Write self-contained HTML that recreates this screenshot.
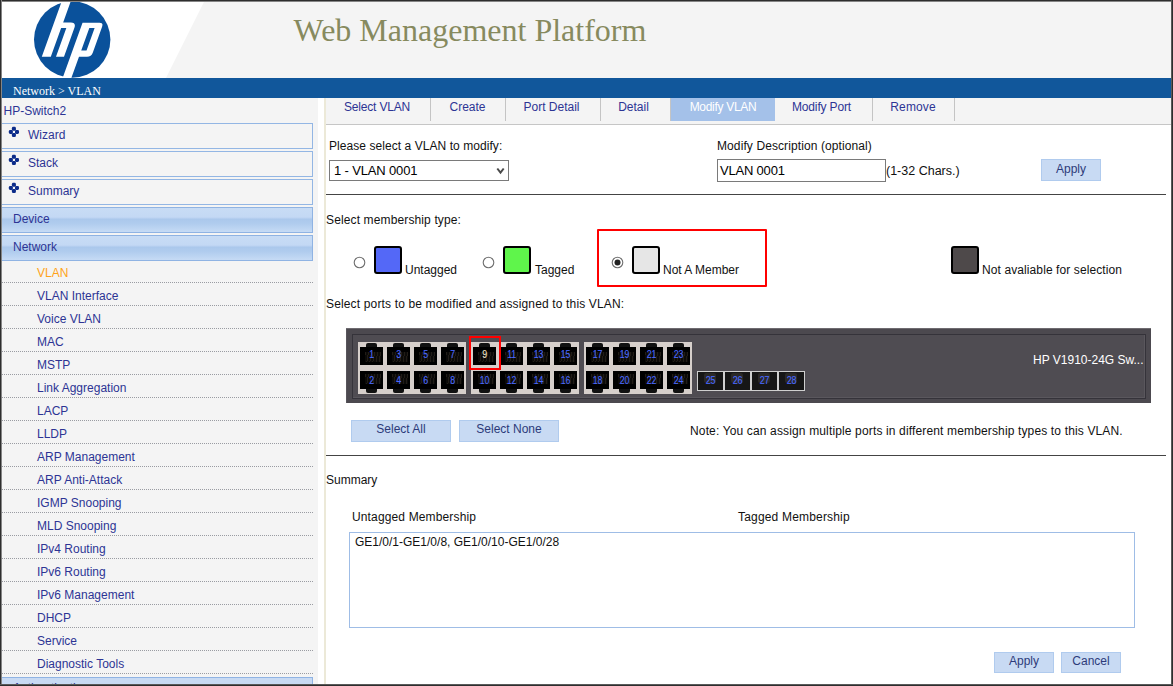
<!DOCTYPE html><html><head><meta charset="utf-8"><style>
html,body{margin:0;padding:0;}
body{width:1173px;height:686px;overflow:hidden;position:relative;background:#fff;font-family:'Liberation Sans',sans-serif;}
.t{position:absolute;white-space:nowrap;}
.r{position:absolute;box-sizing:border-box;}
</style></head><body>
<svg class="r" style="left:0;top:0" width="1173" height="78"><polygon points="205,0 1173,0 1173,78 166,78" fill="#f4f4f4"/></svg>
<svg class="r" style="left:0;top:0" width="200" height="78" viewBox="0 0 200 78">
<defs><clipPath id="cl"><rect x="0" y="0" width="200" height="78"/></clipPath></defs>
<g clip-path="url(#cl)">
<circle cx="72.2" cy="39.5" r="38.2" fill="#0a519b"/>
<g transform="translate(20.41,0) skewX(-19.8)" fill="#fff">
<path d="M41.8,-12 L50.8,-12 L50.8,22.4 L58.5,22.4 Q64,22.4 64,28 L64,56.7 L56,56.7 L56,28 L50.8,28 L50.8,56.7 L41.8,56.7 Z"/>
<path fill-rule="evenodd" d="M70.3,22.7 L87.3,22.7 Q91.3,22.7 91.3,26.7 L91.3,52.4 Q91.3,56.7 87,56.7 L79,56.7 L79,95 L70.3,95 Z M79,28 L84.3,28 L84.3,50.5 L79,50.5 Z"/>
</g></g></svg>
<div class="t" style="left:293.5px;top:10px;font-size:32px;line-height:40px;color:#878a5e;font-family:'Liberation Serif', serif;">Web Management Platform</div>
<div class="r" style="left:0px;top:78px;width:1173px;height:20px;background:#11579b;"></div>
<div class="t" style="left:13px;top:81px;font-size:12px;line-height:20px;color:#fff;font-family:'Liberation Serif', serif;">Network &gt; VLAN</div>
<div class="r" style="left:0px;top:98px;width:318px;height:588px;background:#f4f4f4;"></div>
<div class="r" style="left:324px;top:98px;width:2px;height:588px;background:#ece9d8;"></div>
<div class="t" style="left:3.5px;top:101px;font-size:12px;line-height:20px;color:#2d3494;font-family:'Liberation Sans', sans-serif;">HP-Switch2</div>
<div class="r" style="left:0px;top:123px;width:313px;height:26px;border:1px solid #93b6e4;background:#f4f4f4;"></div>
<div class="r" style="left:7px;top:124px;width:14px;height:14px;"><svg width="14" height="14" viewBox="0 0 14 14"><g fill="#0c2c8a"><rect x="4.9" y="2.85" width="4" height="4" rx="1.3"/><rect x="1.85" y="5.9" width="4" height="4" rx="1.3"/><rect x="8" y="5.9" width="4" height="4" rx="1.3"/><rect x="4.9" y="9" width="4" height="4" rx="1.3"/></g></svg></div>
<div class="t" style="left:28px;top:125px;font-size:12px;line-height:20px;color:#2d3494;font-family:'Liberation Sans', sans-serif;">Wizard</div>
<div class="r" style="left:0px;top:151px;width:313px;height:26px;border:1px solid #93b6e4;background:#f4f4f4;"></div>
<div class="r" style="left:7px;top:152px;width:14px;height:14px;"><svg width="14" height="14" viewBox="0 0 14 14"><g fill="#0c2c8a"><rect x="4.9" y="2.85" width="4" height="4" rx="1.3"/><rect x="1.85" y="5.9" width="4" height="4" rx="1.3"/><rect x="8" y="5.9" width="4" height="4" rx="1.3"/><rect x="4.9" y="9" width="4" height="4" rx="1.3"/></g></svg></div>
<div class="t" style="left:28px;top:153px;font-size:12px;line-height:20px;color:#2d3494;font-family:'Liberation Sans', sans-serif;">Stack</div>
<div class="r" style="left:0px;top:179px;width:313px;height:26px;border:1px solid #93b6e4;background:#f4f4f4;"></div>
<div class="r" style="left:7px;top:180px;width:14px;height:14px;"><svg width="14" height="14" viewBox="0 0 14 14"><g fill="#0c2c8a"><rect x="4.9" y="2.85" width="4" height="4" rx="1.3"/><rect x="1.85" y="5.9" width="4" height="4" rx="1.3"/><rect x="8" y="5.9" width="4" height="4" rx="1.3"/><rect x="4.9" y="9" width="4" height="4" rx="1.3"/></g></svg></div>
<div class="t" style="left:28px;top:181px;font-size:12px;line-height:20px;color:#2d3494;font-family:'Liberation Sans', sans-serif;">Summary</div>
<div class="r" style="left:0px;top:207px;width:313px;height:26px;border:1px solid #8fb3e3;background:linear-gradient(#c8dcf5 0%,#c3d8f4 38%,#abc8ec 47%,#b0ccee 65%,#c6dbf5 100%);"></div>
<div class="t" style="left:13px;top:209px;font-size:12px;line-height:20px;color:#2d3494;font-family:'Liberation Sans', sans-serif;">Device</div>
<div class="r" style="left:0px;top:235px;width:313px;height:26px;border:1px solid #8fb3e3;background:linear-gradient(#c8dcf5 0%,#c3d8f4 38%,#abc8ec 47%,#b0ccee 65%,#c6dbf5 100%);"></div>
<div class="t" style="left:13px;top:237px;font-size:12px;line-height:20px;color:#2d3494;font-family:'Liberation Sans', sans-serif;">Network</div>
<div class="t" style="left:37px;top:263px;font-size:12px;line-height:20px;color:#ffa31a;font-family:'Liberation Sans', sans-serif;">VLAN</div>
<div class="r" style="left:2px;top:282px;width:311px;height:1px;background:repeating-linear-gradient(90deg,#9a9ca2 0 1px,transparent 1px 2px);"></div>
<div class="t" style="left:37px;top:286px;font-size:12px;line-height:20px;color:#2d3494;font-family:'Liberation Sans', sans-serif;">VLAN Interface</div>
<div class="r" style="left:2px;top:305px;width:311px;height:1px;background:repeating-linear-gradient(90deg,#9a9ca2 0 1px,transparent 1px 2px);"></div>
<div class="t" style="left:37px;top:309px;font-size:12px;line-height:20px;color:#2d3494;font-family:'Liberation Sans', sans-serif;">Voice VLAN</div>
<div class="r" style="left:2px;top:328px;width:311px;height:1px;background:repeating-linear-gradient(90deg,#9a9ca2 0 1px,transparent 1px 2px);"></div>
<div class="t" style="left:37px;top:332px;font-size:12px;line-height:20px;color:#2d3494;font-family:'Liberation Sans', sans-serif;">MAC</div>
<div class="r" style="left:2px;top:351px;width:311px;height:1px;background:repeating-linear-gradient(90deg,#9a9ca2 0 1px,transparent 1px 2px);"></div>
<div class="t" style="left:37px;top:355px;font-size:12px;line-height:20px;color:#2d3494;font-family:'Liberation Sans', sans-serif;">MSTP</div>
<div class="r" style="left:2px;top:374px;width:311px;height:1px;background:repeating-linear-gradient(90deg,#9a9ca2 0 1px,transparent 1px 2px);"></div>
<div class="t" style="left:37px;top:378px;font-size:12px;line-height:20px;color:#2d3494;font-family:'Liberation Sans', sans-serif;">Link Aggregation</div>
<div class="r" style="left:2px;top:397px;width:311px;height:1px;background:repeating-linear-gradient(90deg,#9a9ca2 0 1px,transparent 1px 2px);"></div>
<div class="t" style="left:37px;top:401px;font-size:12px;line-height:20px;color:#2d3494;font-family:'Liberation Sans', sans-serif;">LACP</div>
<div class="r" style="left:2px;top:420px;width:311px;height:1px;background:repeating-linear-gradient(90deg,#9a9ca2 0 1px,transparent 1px 2px);"></div>
<div class="t" style="left:37px;top:424px;font-size:12px;line-height:20px;color:#2d3494;font-family:'Liberation Sans', sans-serif;">LLDP</div>
<div class="r" style="left:2px;top:443px;width:311px;height:1px;background:repeating-linear-gradient(90deg,#9a9ca2 0 1px,transparent 1px 2px);"></div>
<div class="t" style="left:37px;top:447px;font-size:12px;line-height:20px;color:#2d3494;font-family:'Liberation Sans', sans-serif;">ARP Management</div>
<div class="r" style="left:2px;top:466px;width:311px;height:1px;background:repeating-linear-gradient(90deg,#9a9ca2 0 1px,transparent 1px 2px);"></div>
<div class="t" style="left:37px;top:470px;font-size:12px;line-height:20px;color:#2d3494;font-family:'Liberation Sans', sans-serif;">ARP Anti-Attack</div>
<div class="r" style="left:2px;top:489px;width:311px;height:1px;background:repeating-linear-gradient(90deg,#9a9ca2 0 1px,transparent 1px 2px);"></div>
<div class="t" style="left:37px;top:493px;font-size:12px;line-height:20px;color:#2d3494;font-family:'Liberation Sans', sans-serif;">IGMP Snooping</div>
<div class="r" style="left:2px;top:512px;width:311px;height:1px;background:repeating-linear-gradient(90deg,#9a9ca2 0 1px,transparent 1px 2px);"></div>
<div class="t" style="left:37px;top:516px;font-size:12px;line-height:20px;color:#2d3494;font-family:'Liberation Sans', sans-serif;">MLD Snooping</div>
<div class="r" style="left:2px;top:535px;width:311px;height:1px;background:repeating-linear-gradient(90deg,#9a9ca2 0 1px,transparent 1px 2px);"></div>
<div class="t" style="left:37px;top:539px;font-size:12px;line-height:20px;color:#2d3494;font-family:'Liberation Sans', sans-serif;">IPv4 Routing</div>
<div class="r" style="left:2px;top:558px;width:311px;height:1px;background:repeating-linear-gradient(90deg,#9a9ca2 0 1px,transparent 1px 2px);"></div>
<div class="t" style="left:37px;top:562px;font-size:12px;line-height:20px;color:#2d3494;font-family:'Liberation Sans', sans-serif;">IPv6 Routing</div>
<div class="r" style="left:2px;top:581px;width:311px;height:1px;background:repeating-linear-gradient(90deg,#9a9ca2 0 1px,transparent 1px 2px);"></div>
<div class="t" style="left:37px;top:585px;font-size:12px;line-height:20px;color:#2d3494;font-family:'Liberation Sans', sans-serif;">IPv6 Management</div>
<div class="r" style="left:2px;top:604px;width:311px;height:1px;background:repeating-linear-gradient(90deg,#9a9ca2 0 1px,transparent 1px 2px);"></div>
<div class="t" style="left:37px;top:608px;font-size:12px;line-height:20px;color:#2d3494;font-family:'Liberation Sans', sans-serif;">DHCP</div>
<div class="r" style="left:2px;top:627px;width:311px;height:1px;background:repeating-linear-gradient(90deg,#9a9ca2 0 1px,transparent 1px 2px);"></div>
<div class="t" style="left:37px;top:631px;font-size:12px;line-height:20px;color:#2d3494;font-family:'Liberation Sans', sans-serif;">Service</div>
<div class="r" style="left:2px;top:650px;width:311px;height:1px;background:repeating-linear-gradient(90deg,#9a9ca2 0 1px,transparent 1px 2px);"></div>
<div class="t" style="left:37px;top:654px;font-size:12px;line-height:20px;color:#2d3494;font-family:'Liberation Sans', sans-serif;">Diagnostic Tools</div>
<div class="r" style="left:2px;top:673px;width:311px;height:1px;background:repeating-linear-gradient(90deg,#9a9ca2 0 1px,transparent 1px 2px);"></div>
<div class="r" style="left:0px;top:677px;width:313px;height:23px;border:1px solid #8fb3e3;background:#c8daf3;"></div>
<div class="t" style="left:13px;top:678px;font-size:12px;line-height:20px;color:#2d3494;font-family:'Liberation Sans', sans-serif;">Authentication</div>
<div class="r" style="left:326px;top:98px;width:845px;height:26px;background:#f4f4f4;"></div>
<div class="r" style="left:326px;top:124px;width:845px;height:1px;background:#c6c6c6;"></div>
<div class="r" style="left:671px;top:98px;width:104px;height:23px;background:#a4c1e9;"></div>
<div class="r" style="left:430px;top:98px;width:1px;height:23px;background:#c4c4c4;"></div>
<div class="r" style="left:505px;top:98px;width:1px;height:23px;background:#c4c4c4;"></div>
<div class="r" style="left:600px;top:98px;width:1px;height:23px;background:#c4c4c4;"></div>
<div class="r" style="left:670px;top:98px;width:1px;height:23px;background:#c4c4c4;"></div>
<div class="r" style="left:872px;top:98px;width:1px;height:23px;background:#c4c4c4;"></div>
<div class="r" style="left:954px;top:98px;width:1px;height:23px;background:#c4c4c4;"></div>
<div class="t" style="left:325px;top:97px;width:104px;text-align:center;font-size:12px;line-height:20px;color:#2d3494;letter-spacing:-0.18px;">Select VLAN</div>
<div class="t" style="left:430.5px;top:97px;width:74.0px;text-align:center;font-size:12px;line-height:20px;color:#2d3494;letter-spacing:0px;">Create</div>
<div class="t" style="left:504.5px;top:97px;width:94.0px;text-align:center;font-size:12px;line-height:20px;color:#2d3494;letter-spacing:0px;">Port Detail</div>
<div class="t" style="left:599px;top:97px;width:69px;text-align:center;font-size:12px;line-height:20px;color:#2d3494;letter-spacing:0px;">Detail</div>
<div class="t" style="left:671px;top:97px;width:104px;text-align:center;font-size:12px;line-height:20px;color:#fff;letter-spacing:-0.3px;">Modify VLAN</div>
<div class="t" style="left:773px;top:97px;width:97px;text-align:center;font-size:12px;line-height:20px;color:#2d3494;letter-spacing:-0.15px;">Modify Port</div>
<div class="t" style="left:872.5px;top:97px;width:81.0px;text-align:center;font-size:12px;line-height:20px;color:#2d3494;letter-spacing:0.12px;">Remove</div>
<div class="t" style="left:329px;top:136px;font-size:12px;line-height:20px;color:#111;font-family:'Liberation Sans', sans-serif;letter-spacing:0.06px;">Please select a VLAN to modify:</div>
<div class="r" style="left:329px;top:160px;width:180px;height:21px;border:1px solid #7a7a7a;background:#fff;"></div>
<div class="t" style="left:334px;top:161px;font-size:13px;line-height:20px;color:#000;font-family:'Liberation Sans', sans-serif;letter-spacing:-0.15px;">1 - VLAN 0001</div>
<svg class="r" style="left:495px;top:167px" width="11" height="8"><polyline points="2.3,1.5 5.5,5.6 8.7,1.5" fill="none" stroke="#4a4a4a" stroke-width="2"/></svg>
<div class="t" style="left:717px;top:136px;font-size:12px;line-height:20px;color:#111;font-family:'Liberation Sans', sans-serif;letter-spacing:0.1px;">Modify Description (optional)</div>
<div class="r" style="left:717px;top:159px;width:169px;height:23px;border:1px solid #7a7a7a;background:#fff;"></div>
<div class="t" style="left:720px;top:161px;font-size:13px;line-height:20px;color:#000;font-family:'Liberation Sans', sans-serif;letter-spacing:-0.2px;">VLAN 0001</div>
<div class="t" style="left:886px;top:161px;font-size:12.5px;line-height:20px;color:#111;font-family:'Liberation Sans', sans-serif;">(1-32 Chars.)</div>
<div class="r" style="left:1041px;top:159px;width:60px;height:22px;background:#c8daf3;border:1px solid #b0cbee;"></div>
<div class="t" style="left:1041px;top:159px;width:60px;text-align:center;font-size:12px;line-height:20px;color:#2d3a7a;">Apply</div>
<div class="r" style="left:326px;top:194px;width:840px;height:1px;background:#444;"></div>
<div class="t" style="left:326px;top:210px;font-size:12px;line-height:20px;color:#111;font-family:'Liberation Sans', sans-serif;letter-spacing:0.13px;">Select membership type:</div>
<svg class="r" style="left:353.0px;top:256.0px" width="13" height="13"><circle cx="6.5" cy="6.5" r="5.3" fill="#fff" stroke="#6f6f6f" stroke-width="1.1"/></svg>
<svg class="r" style="left:482.0px;top:256.0px" width="13" height="13"><circle cx="6.5" cy="6.5" r="5.3" fill="#fff" stroke="#6f6f6f" stroke-width="1.1"/></svg>
<svg class="r" style="left:611.0px;top:256.0px" width="13" height="13"><circle cx="6.5" cy="6.5" r="5.3" fill="#fff" stroke="#6f6f6f" stroke-width="1.1"/><circle cx="6.5" cy="6.5" r="3" fill="#222"/></svg>
<div class="r" style="left:374px;top:246px;width:28px;height:28px;border:2px solid #000;border-radius:3px;background:#5468f7;"></div>
<div class="r" style="left:503px;top:246px;width:28px;height:28px;border:2px solid #000;border-radius:3px;background:#5ff54b;"></div>
<div class="r" style="left:632px;top:246px;width:28px;height:28px;border:2px solid #000;border-radius:3px;background:#e6e6e6;"></div>
<div class="r" style="left:951px;top:246px;width:28px;height:28px;border:2px solid #000;border-radius:3px;background:#4e494a;"></div>
<div class="t" style="left:405px;top:260px;font-size:12px;line-height:20px;color:#111;font-family:'Liberation Sans', sans-serif;">Untagged</div>
<div class="t" style="left:535px;top:260px;font-size:12px;line-height:20px;color:#111;font-family:'Liberation Sans', sans-serif;">Tagged</div>
<div class="t" style="left:663px;top:260px;font-size:12px;line-height:20px;color:#111;font-family:'Liberation Sans', sans-serif;">Not A Member</div>
<div class="t" style="left:982px;top:260px;font-size:12px;line-height:20px;color:#111;font-family:'Liberation Sans', sans-serif;letter-spacing:0.1px;">Not avaliable for selection</div>
<div class="r" style="left:597px;top:229px;width:170px;height:58px;border:2px solid #ff0000;border-radius:1px;"></div>
<div class="t" style="left:326px;top:294px;font-size:12px;line-height:20px;color:#111;font-family:'Liberation Sans', sans-serif;letter-spacing:0.15px;">Select ports to be modified and assigned to this VLAN:</div>
<div class="r" style="left:346px;top:328px;width:805px;height:75px;background:#4c494f;border-top:1px solid #6e6b70;box-shadow:inset 1px 0 0 #58555b;"></div>
<div class="r" style="left:352px;top:334px;width:794px;height:65px;background:#4f4c52;border:1px solid #35333a;box-shadow:inset -1px -1px 0 #5a575d;"></div>
<div class="r" style="left:358px;top:342px;width:108px;height:52px;background:#d6cfcb;"></div>
<div class="r" style="left:471px;top:342px;width:108px;height:52px;background:#d6cfcb;"></div>
<div class="r" style="left:584px;top:342px;width:108px;height:52px;background:#d6cfcb;"></div>
<div class="r" style="left:366px;top:343px;width:11px;height:5px;background:#111;border-radius:2px 2px 0 0;"></div>
<div class="r" style="left:360px;top:347px;width:23px;height:18px;background:#000;"></div>
<div class="r" style="left:365px;top:352px;width:16px;height:10px;background:repeating-linear-gradient(100deg,#211c17 0 1px,#0b0a08 1px 3px);"></div>
<div class="t" style="left:360px;top:345px;width:23px;text-align:center;font-size:10px;line-height:20px;color:#4a6aff;letter-spacing:-0.3px;-webkit-text-stroke:0.1px #4a6aff;transform:scaleX(0.88);">1</div>
<div class="r" style="left:366px;top:388px;width:11px;height:5px;background:#111;border-radius:0 0 2px 2px;"></div>
<div class="r" style="left:360px;top:371px;width:23px;height:18px;background:#000;"></div>
<div class="r" style="left:365px;top:374px;width:16px;height:10px;background:repeating-linear-gradient(100deg,#211c17 0 1px,#0b0a08 1px 3px);"></div>
<div class="t" style="left:360px;top:371px;width:23px;text-align:center;font-size:10px;line-height:20px;color:#4a6aff;letter-spacing:-0.3px;-webkit-text-stroke:0.1px #4a6aff;transform:scaleX(0.88);">2</div>
<div class="r" style="left:393px;top:343px;width:11px;height:5px;background:#111;border-radius:2px 2px 0 0;"></div>
<div class="r" style="left:387px;top:347px;width:23px;height:18px;background:#000;"></div>
<div class="r" style="left:392px;top:352px;width:16px;height:10px;background:repeating-linear-gradient(100deg,#211c17 0 1px,#0b0a08 1px 3px);"></div>
<div class="t" style="left:387px;top:345px;width:23px;text-align:center;font-size:10px;line-height:20px;color:#4a6aff;letter-spacing:-0.3px;-webkit-text-stroke:0.1px #4a6aff;transform:scaleX(0.88);">3</div>
<div class="r" style="left:393px;top:388px;width:11px;height:5px;background:#111;border-radius:0 0 2px 2px;"></div>
<div class="r" style="left:387px;top:371px;width:23px;height:18px;background:#000;"></div>
<div class="r" style="left:392px;top:374px;width:16px;height:10px;background:repeating-linear-gradient(100deg,#211c17 0 1px,#0b0a08 1px 3px);"></div>
<div class="t" style="left:387px;top:371px;width:23px;text-align:center;font-size:10px;line-height:20px;color:#4a6aff;letter-spacing:-0.3px;-webkit-text-stroke:0.1px #4a6aff;transform:scaleX(0.88);">4</div>
<div class="r" style="left:420px;top:343px;width:11px;height:5px;background:#111;border-radius:2px 2px 0 0;"></div>
<div class="r" style="left:414px;top:347px;width:23px;height:18px;background:#000;"></div>
<div class="r" style="left:419px;top:352px;width:16px;height:10px;background:repeating-linear-gradient(100deg,#211c17 0 1px,#0b0a08 1px 3px);"></div>
<div class="t" style="left:414px;top:345px;width:23px;text-align:center;font-size:10px;line-height:20px;color:#4a6aff;letter-spacing:-0.3px;-webkit-text-stroke:0.1px #4a6aff;transform:scaleX(0.88);">5</div>
<div class="r" style="left:420px;top:388px;width:11px;height:5px;background:#111;border-radius:0 0 2px 2px;"></div>
<div class="r" style="left:414px;top:371px;width:23px;height:18px;background:#000;"></div>
<div class="r" style="left:419px;top:374px;width:16px;height:10px;background:repeating-linear-gradient(100deg,#211c17 0 1px,#0b0a08 1px 3px);"></div>
<div class="t" style="left:414px;top:371px;width:23px;text-align:center;font-size:10px;line-height:20px;color:#4a6aff;letter-spacing:-0.3px;-webkit-text-stroke:0.1px #4a6aff;transform:scaleX(0.88);">6</div>
<div class="r" style="left:447px;top:343px;width:11px;height:5px;background:#111;border-radius:2px 2px 0 0;"></div>
<div class="r" style="left:441px;top:347px;width:23px;height:18px;background:#000;"></div>
<div class="r" style="left:446px;top:352px;width:16px;height:10px;background:repeating-linear-gradient(100deg,#211c17 0 1px,#0b0a08 1px 3px);"></div>
<div class="t" style="left:441px;top:345px;width:23px;text-align:center;font-size:10px;line-height:20px;color:#4a6aff;letter-spacing:-0.3px;-webkit-text-stroke:0.1px #4a6aff;transform:scaleX(0.88);">7</div>
<div class="r" style="left:447px;top:388px;width:11px;height:5px;background:#111;border-radius:0 0 2px 2px;"></div>
<div class="r" style="left:441px;top:371px;width:23px;height:18px;background:#000;"></div>
<div class="r" style="left:446px;top:374px;width:16px;height:10px;background:repeating-linear-gradient(100deg,#211c17 0 1px,#0b0a08 1px 3px);"></div>
<div class="t" style="left:441px;top:371px;width:23px;text-align:center;font-size:10px;line-height:20px;color:#4a6aff;letter-spacing:-0.3px;-webkit-text-stroke:0.1px #4a6aff;transform:scaleX(0.88);">8</div>
<div class="r" style="left:479px;top:343px;width:11px;height:5px;background:#111;border-radius:2px 2px 0 0;"></div>
<div class="r" style="left:473px;top:347px;width:23px;height:18px;background:#000;"></div>
<div class="r" style="left:478px;top:352px;width:16px;height:10px;background:repeating-linear-gradient(100deg,#211c17 0 1px,#0b0a08 1px 3px);"></div>
<div class="t" style="left:473px;top:345px;width:23px;text-align:center;font-size:10px;line-height:20px;color:#f4e6cc;letter-spacing:-0.3px;-webkit-text-stroke:0.1px #f4e6cc;transform:scaleX(0.88);">9</div>
<div class="r" style="left:479px;top:388px;width:11px;height:5px;background:#111;border-radius:0 0 2px 2px;"></div>
<div class="r" style="left:473px;top:371px;width:23px;height:18px;background:#000;"></div>
<div class="r" style="left:478px;top:374px;width:16px;height:10px;background:repeating-linear-gradient(100deg,#211c17 0 1px,#0b0a08 1px 3px);"></div>
<div class="t" style="left:473px;top:371px;width:23px;text-align:center;font-size:10px;line-height:20px;color:#4a6aff;letter-spacing:-0.3px;-webkit-text-stroke:0.1px #4a6aff;transform:scaleX(0.88);">10</div>
<div class="r" style="left:506px;top:343px;width:11px;height:5px;background:#111;border-radius:2px 2px 0 0;"></div>
<div class="r" style="left:500px;top:347px;width:23px;height:18px;background:#000;"></div>
<div class="r" style="left:505px;top:352px;width:16px;height:10px;background:repeating-linear-gradient(100deg,#211c17 0 1px,#0b0a08 1px 3px);"></div>
<div class="t" style="left:500px;top:345px;width:23px;text-align:center;font-size:10px;line-height:20px;color:#4a6aff;letter-spacing:-0.3px;-webkit-text-stroke:0.1px #4a6aff;transform:scaleX(0.88);">11</div>
<div class="r" style="left:506px;top:388px;width:11px;height:5px;background:#111;border-radius:0 0 2px 2px;"></div>
<div class="r" style="left:500px;top:371px;width:23px;height:18px;background:#000;"></div>
<div class="r" style="left:505px;top:374px;width:16px;height:10px;background:repeating-linear-gradient(100deg,#211c17 0 1px,#0b0a08 1px 3px);"></div>
<div class="t" style="left:500px;top:371px;width:23px;text-align:center;font-size:10px;line-height:20px;color:#4a6aff;letter-spacing:-0.3px;-webkit-text-stroke:0.1px #4a6aff;transform:scaleX(0.88);">12</div>
<div class="r" style="left:533px;top:343px;width:11px;height:5px;background:#111;border-radius:2px 2px 0 0;"></div>
<div class="r" style="left:527px;top:347px;width:23px;height:18px;background:#000;"></div>
<div class="r" style="left:532px;top:352px;width:16px;height:10px;background:repeating-linear-gradient(100deg,#211c17 0 1px,#0b0a08 1px 3px);"></div>
<div class="t" style="left:527px;top:345px;width:23px;text-align:center;font-size:10px;line-height:20px;color:#4a6aff;letter-spacing:-0.3px;-webkit-text-stroke:0.1px #4a6aff;transform:scaleX(0.88);">13</div>
<div class="r" style="left:533px;top:388px;width:11px;height:5px;background:#111;border-radius:0 0 2px 2px;"></div>
<div class="r" style="left:527px;top:371px;width:23px;height:18px;background:#000;"></div>
<div class="r" style="left:532px;top:374px;width:16px;height:10px;background:repeating-linear-gradient(100deg,#211c17 0 1px,#0b0a08 1px 3px);"></div>
<div class="t" style="left:527px;top:371px;width:23px;text-align:center;font-size:10px;line-height:20px;color:#4a6aff;letter-spacing:-0.3px;-webkit-text-stroke:0.1px #4a6aff;transform:scaleX(0.88);">14</div>
<div class="r" style="left:560px;top:343px;width:11px;height:5px;background:#111;border-radius:2px 2px 0 0;"></div>
<div class="r" style="left:554px;top:347px;width:23px;height:18px;background:#000;"></div>
<div class="r" style="left:559px;top:352px;width:16px;height:10px;background:repeating-linear-gradient(100deg,#211c17 0 1px,#0b0a08 1px 3px);"></div>
<div class="t" style="left:554px;top:345px;width:23px;text-align:center;font-size:10px;line-height:20px;color:#4a6aff;letter-spacing:-0.3px;-webkit-text-stroke:0.1px #4a6aff;transform:scaleX(0.88);">15</div>
<div class="r" style="left:560px;top:388px;width:11px;height:5px;background:#111;border-radius:0 0 2px 2px;"></div>
<div class="r" style="left:554px;top:371px;width:23px;height:18px;background:#000;"></div>
<div class="r" style="left:559px;top:374px;width:16px;height:10px;background:repeating-linear-gradient(100deg,#211c17 0 1px,#0b0a08 1px 3px);"></div>
<div class="t" style="left:554px;top:371px;width:23px;text-align:center;font-size:10px;line-height:20px;color:#4a6aff;letter-spacing:-0.3px;-webkit-text-stroke:0.1px #4a6aff;transform:scaleX(0.88);">16</div>
<div class="r" style="left:592px;top:343px;width:11px;height:5px;background:#111;border-radius:2px 2px 0 0;"></div>
<div class="r" style="left:586px;top:347px;width:23px;height:18px;background:#000;"></div>
<div class="r" style="left:591px;top:352px;width:16px;height:10px;background:repeating-linear-gradient(100deg,#211c17 0 1px,#0b0a08 1px 3px);"></div>
<div class="t" style="left:586px;top:345px;width:23px;text-align:center;font-size:10px;line-height:20px;color:#4a6aff;letter-spacing:-0.3px;-webkit-text-stroke:0.1px #4a6aff;transform:scaleX(0.88);">17</div>
<div class="r" style="left:592px;top:388px;width:11px;height:5px;background:#111;border-radius:0 0 2px 2px;"></div>
<div class="r" style="left:586px;top:371px;width:23px;height:18px;background:#000;"></div>
<div class="r" style="left:591px;top:374px;width:16px;height:10px;background:repeating-linear-gradient(100deg,#211c17 0 1px,#0b0a08 1px 3px);"></div>
<div class="t" style="left:586px;top:371px;width:23px;text-align:center;font-size:10px;line-height:20px;color:#4a6aff;letter-spacing:-0.3px;-webkit-text-stroke:0.1px #4a6aff;transform:scaleX(0.88);">18</div>
<div class="r" style="left:619px;top:343px;width:11px;height:5px;background:#111;border-radius:2px 2px 0 0;"></div>
<div class="r" style="left:613px;top:347px;width:23px;height:18px;background:#000;"></div>
<div class="r" style="left:618px;top:352px;width:16px;height:10px;background:repeating-linear-gradient(100deg,#211c17 0 1px,#0b0a08 1px 3px);"></div>
<div class="t" style="left:613px;top:345px;width:23px;text-align:center;font-size:10px;line-height:20px;color:#4a6aff;letter-spacing:-0.3px;-webkit-text-stroke:0.1px #4a6aff;transform:scaleX(0.88);">19</div>
<div class="r" style="left:619px;top:388px;width:11px;height:5px;background:#111;border-radius:0 0 2px 2px;"></div>
<div class="r" style="left:613px;top:371px;width:23px;height:18px;background:#000;"></div>
<div class="r" style="left:618px;top:374px;width:16px;height:10px;background:repeating-linear-gradient(100deg,#211c17 0 1px,#0b0a08 1px 3px);"></div>
<div class="t" style="left:613px;top:371px;width:23px;text-align:center;font-size:10px;line-height:20px;color:#4a6aff;letter-spacing:-0.3px;-webkit-text-stroke:0.1px #4a6aff;transform:scaleX(0.88);">20</div>
<div class="r" style="left:646px;top:343px;width:11px;height:5px;background:#111;border-radius:2px 2px 0 0;"></div>
<div class="r" style="left:640px;top:347px;width:23px;height:18px;background:#000;"></div>
<div class="r" style="left:645px;top:352px;width:16px;height:10px;background:repeating-linear-gradient(100deg,#211c17 0 1px,#0b0a08 1px 3px);"></div>
<div class="t" style="left:640px;top:345px;width:23px;text-align:center;font-size:10px;line-height:20px;color:#4a6aff;letter-spacing:-0.3px;-webkit-text-stroke:0.1px #4a6aff;transform:scaleX(0.88);">21</div>
<div class="r" style="left:646px;top:388px;width:11px;height:5px;background:#111;border-radius:0 0 2px 2px;"></div>
<div class="r" style="left:640px;top:371px;width:23px;height:18px;background:#000;"></div>
<div class="r" style="left:645px;top:374px;width:16px;height:10px;background:repeating-linear-gradient(100deg,#211c17 0 1px,#0b0a08 1px 3px);"></div>
<div class="t" style="left:640px;top:371px;width:23px;text-align:center;font-size:10px;line-height:20px;color:#4a6aff;letter-spacing:-0.3px;-webkit-text-stroke:0.1px #4a6aff;transform:scaleX(0.88);">22</div>
<div class="r" style="left:673px;top:343px;width:11px;height:5px;background:#111;border-radius:2px 2px 0 0;"></div>
<div class="r" style="left:667px;top:347px;width:23px;height:18px;background:#000;"></div>
<div class="r" style="left:672px;top:352px;width:16px;height:10px;background:repeating-linear-gradient(100deg,#211c17 0 1px,#0b0a08 1px 3px);"></div>
<div class="t" style="left:667px;top:345px;width:23px;text-align:center;font-size:10px;line-height:20px;color:#4a6aff;letter-spacing:-0.3px;-webkit-text-stroke:0.1px #4a6aff;transform:scaleX(0.88);">23</div>
<div class="r" style="left:673px;top:388px;width:11px;height:5px;background:#111;border-radius:0 0 2px 2px;"></div>
<div class="r" style="left:667px;top:371px;width:23px;height:18px;background:#000;"></div>
<div class="r" style="left:672px;top:374px;width:16px;height:10px;background:repeating-linear-gradient(100deg,#211c17 0 1px,#0b0a08 1px 3px);"></div>
<div class="t" style="left:667px;top:371px;width:23px;text-align:center;font-size:10px;line-height:20px;color:#4a6aff;letter-spacing:-0.3px;-webkit-text-stroke:0.1px #4a6aff;transform:scaleX(0.88);">24</div>
<div class="r" style="left:469px;top:336px;width:32px;height:34px;border:2px solid #ff0000;"></div>
<div class="r" style="left:697px;top:371px;width:27px;height:20px;background:#161616;border:1px solid #cfcfcf;"></div>
<div class="r" style="left:704px;top:373px;width:12px;height:10px;background:#2b2926;border-radius:2px;"></div>
<div class="t" style="left:697px;top:371px;width:27px;text-align:center;font-size:10px;line-height:20px;color:#4a6aff;letter-spacing:-0.2px;-webkit-text-stroke:0.1px #4a6aff;transform:scaleX(0.9);">25</div>
<div class="r" style="left:724px;top:371px;width:27px;height:20px;background:#161616;border:1px solid #cfcfcf;"></div>
<div class="r" style="left:731px;top:373px;width:12px;height:10px;background:#2b2926;border-radius:2px;"></div>
<div class="t" style="left:724px;top:371px;width:27px;text-align:center;font-size:10px;line-height:20px;color:#4a6aff;letter-spacing:-0.2px;-webkit-text-stroke:0.1px #4a6aff;transform:scaleX(0.9);">26</div>
<div class="r" style="left:751px;top:371px;width:27px;height:20px;background:#161616;border:1px solid #cfcfcf;"></div>
<div class="r" style="left:758px;top:373px;width:12px;height:10px;background:#2b2926;border-radius:2px;"></div>
<div class="t" style="left:751px;top:371px;width:27px;text-align:center;font-size:10px;line-height:20px;color:#4a6aff;letter-spacing:-0.2px;-webkit-text-stroke:0.1px #4a6aff;transform:scaleX(0.9);">27</div>
<div class="r" style="left:778px;top:371px;width:27px;height:20px;background:#161616;border:1px solid #cfcfcf;"></div>
<div class="r" style="left:785px;top:373px;width:12px;height:10px;background:#2b2926;border-radius:2px;"></div>
<div class="t" style="left:778px;top:371px;width:27px;text-align:center;font-size:10px;line-height:20px;color:#4a6aff;letter-spacing:-0.2px;-webkit-text-stroke:0.1px #4a6aff;transform:scaleX(0.9);">28</div>
<div class="t" style="left:1033px;top:350px;font-size:12px;line-height:20px;color:#fff;font-family:'Liberation Sans', sans-serif;">HP V1910-24G Sw...</div>
<div class="r" style="left:351px;top:420px;width:100px;height:22px;background:#c8daf3;border:1px solid #b0cbee;"></div>
<div class="t" style="left:351px;top:419px;width:100px;text-align:center;font-size:12px;line-height:20px;color:#2d3a7a;">Select All</div>
<div class="r" style="left:459px;top:420px;width:100px;height:22px;background:#c8daf3;border:1px solid #b0cbee;"></div>
<div class="t" style="left:459px;top:419px;width:100px;text-align:center;font-size:12px;line-height:20px;color:#2d3a7a;">Select None</div>
<div class="t" style="left:690px;top:421px;font-size:12px;line-height:20px;color:#111;font-family:'Liberation Sans', sans-serif;letter-spacing:0.145px;">Note: You can assign multiple ports in different membership types to this VLAN.</div>
<div class="r" style="left:326px;top:455px;width:840px;height:1px;background:#444;"></div>
<div class="t" style="left:326px;top:470px;font-size:12px;line-height:20px;color:#111;font-family:'Liberation Sans', sans-serif;">Summary</div>
<div class="t" style="left:352px;top:507px;font-size:12px;line-height:20px;color:#111;font-family:'Liberation Sans', sans-serif;letter-spacing:0.14px;">Untagged Membership</div>
<div class="t" style="left:738px;top:507px;font-size:12px;line-height:20px;color:#111;font-family:'Liberation Sans', sans-serif;letter-spacing:0.18px;">Tagged Membership</div>
<div class="r" style="left:349px;top:532px;width:786px;height:96px;border:1px solid #9fbde6;background:#fff;"></div>
<div class="t" style="left:355px;top:532px;font-size:12px;line-height:20px;color:#111;font-family:'Liberation Sans', sans-serif;">GE1/0/1-GE1/0/8, GE1/0/10-GE1/0/28</div>
<div class="r" style="left:994px;top:652px;width:60px;height:21px;background:#c8daf3;border:1px solid #b0cbee;"></div>
<div class="t" style="left:994px;top:651px;width:60px;text-align:center;font-size:12px;line-height:20px;color:#2d3a7a;">Apply</div>
<div class="r" style="left:1061px;top:652px;width:60px;height:21px;background:#c8daf3;border:1px solid #b0cbee;"></div>
<div class="t" style="left:1061px;top:651px;width:60px;text-align:center;font-size:12px;line-height:20px;color:#2d3a7a;">Cancel</div>
<div class="r" style="left:0px;top:0px;width:1173px;height:2px;background:linear-gradient(#2e2e2e 0 1px,#858585 1px 2px);"></div>
<div class="r" style="left:0px;top:0px;width:2px;height:686px;background:linear-gradient(90deg,#2e2e2e 0 1px,#858585 1px 2px);"></div>
<div class="r" style="left:1171px;top:0px;width:2px;height:686px;background:linear-gradient(90deg,#5a5a5a 0 1px,#2e2e2e 1px 2px);"></div>
<div class="r" style="left:0px;top:684px;width:1173px;height:2px;background:linear-gradient(#5a5a5a 0 1px,#2e2e2e 1px 2px);"></div>
</body></html>
